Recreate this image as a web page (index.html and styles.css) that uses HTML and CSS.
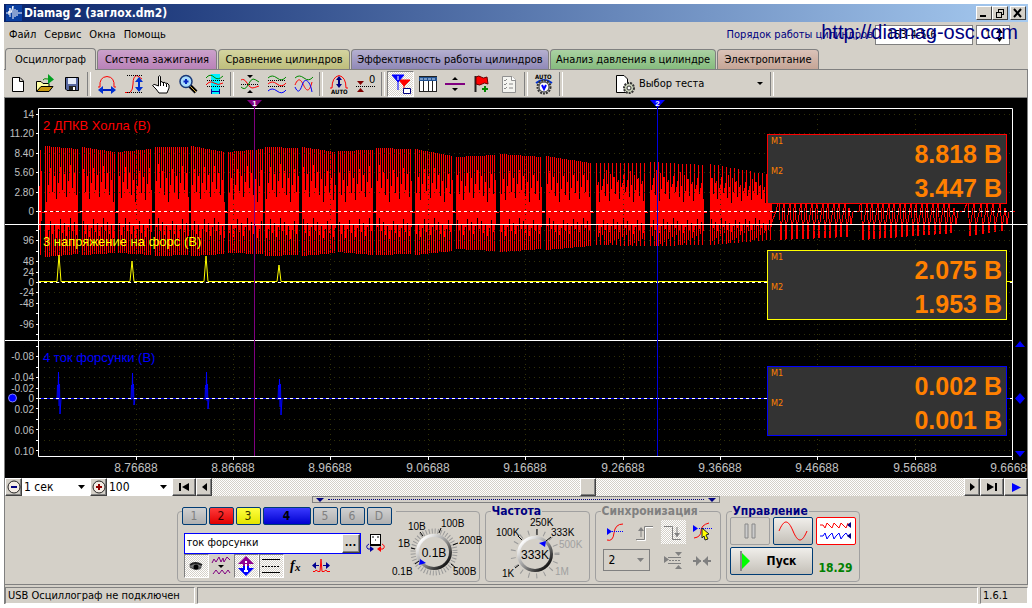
FILE: index.html
```html
<!DOCTYPE html>
<html lang="ru">
<head>
<meta charset="utf-8">
<title>Diamag 2 (заглох.dm2)</title>
<link rel="stylesheet" href="styles.css">
</head>
<body>
<div class="window">
  <header class="titlebar">
    <svg class="app-icon" width="16" height="16" viewBox="0 0 16 16"><rect width="16" height="16" fill="#0a3fa0"/><path d="M0 8H3V6V10M4 8V3V12M5 8L7 1V14M9 4V12M11 5V11M12 8H16" stroke="#fff" fill="none"/></svg>
    <h1 class="title">Diamag 2 (заглох.dm2)</h1>
    <div class="winbtns">
      <button class="winbtn" aria-label="Свернуть"><svg width="12" height="10"><path d="M2 8H8" stroke="#000" stroke-width="2"/></svg></button>
      <button class="winbtn" aria-label="Восстановить"><svg width="12" height="10" shape-rendering="crispEdges"><path d="M4 1.5H10M4.500 1V4M9.500 1V6H7M2 4.500H7M2.500 4V9.500H7.500V4" stroke="#000" fill="none"/></svg></button>
      <button class="winbtn close" aria-label="Закрыть"><svg width="12" height="10"><path d="M2 1L9 9M9 1L2 9" stroke="#000" stroke-width="2"/></svg></button>
    </div>
  </header>
  <div class="menurow">
    <nav class="menu"><button>Файл</button><button>Сервис</button><button>Окна</button><button>Помощь</button></nav>
    <label class="order-label" for="order">Порядок работы цилиндров</label>
    <select id="order" class="order"><option>153-4-5-6</option></select>
    <input class="order-num" aria-label="Номер цилиндра" value="1">
    <svg class="spin" width="7" height="14"><path d="M0 5L3.500 0L7 5ZM0 9L3.500 14L7 9ZM3 4h1v6h-1z"/></svg>
    <a class="sitelink" href="#">http://diamag-osc.com</a>
  </div>
  <div class="tabs" role="tablist">
    <button class="tab active" role="tab">Осциллограф</button>
    <button class="tab t-pink" role="tab">Система зажигания</button>
    <button class="tab t-olive" role="tab">Сравнение цилиндров</button>
    <button class="tab t-violet" role="tab">Эффективность работы цилиндров</button>
    <button class="tab t-green" role="tab">Анализ давления в цилиндре</button>
    <button class="tab t-rose" role="tab">Электропитание</button>
  </div>
  <div class="toolbar">
    <button class="tool" aria-label="Новый"><svg viewBox="0 0 20 20"><path d="M4.500 3.500H12L15.500 7V17.500H4.500ZM11.500 3.500V7.500H15.500" fill="#fff" stroke="#000"/></svg></button>
    <button class="tool" aria-label="Открыть"><svg viewBox="0 0 20 20"><path d="M1.500 17V7.500H6L8 9.500H14V12" fill="#ffffa8" stroke="#000"/><path d="M1.500 17.500L6 12.500H18L14 17.500Z" fill="#c89810" stroke="#000"/><path d="M8 6Q9 4 13 5" fill="none" stroke="#080"/><path d="M13 0L19 5.500L13 10Z" fill="#00a020"/></svg></button>
    <button class="tool" aria-label="Сохранить"><svg viewBox="0 0 20 20"><path d="M3.500 3.500H16.500V16.500H5L3.500 15Z" fill="#5868a0" stroke="#000"/><path d="M6 4H14V10H6Z" fill="#e4eaf8"/><path d="M7 12H14V16H7Z" fill="#222"/><path d="M11 13h2v3h-2z" fill="#fff"/></svg></button>
    <span class="sep"></span>
    <button class="tool" aria-label="Развертка"><svg viewBox="0 0 20 20"><path d="M1 13H3Q2 3 10 2.500Q18 3 17 13H19" fill="none" stroke="#f00"/><path d="M5 16H15" stroke="#0020c0" stroke-width="2"/><path d="M1 16L6 12V20ZM19 16L14 12V20Z" fill="#0030d0"/></svg></button>
    <button class="tool" aria-label="Амплитуда"><svg viewBox="0 0 20 20"><path d="M1 18.500H6Q9 16 9 10Q9 2 13 1.500L18 5" fill="none" stroke="#f00"/><path d="M3 1.500H18M3 18.500H18" stroke="#000" stroke-dasharray="1 1"/><path d="M15 5V16" stroke="#0030d0" stroke-width="2"/><path d="M15 3L19 8H11ZM15 18L19 13H11Z" fill="#0030d0"/></svg></button>
    <button class="tool" aria-label="Рука"><svg viewBox="0 0 20 20"><path d="M7.500 12V2.500Q8.500 1 9.500 2.500V8L11 7.500L12 9L13 8L15 9.500L16 9L18 11V14L16 19H8L5 15L1.500 11.500Q3 9.500 5 11Z" fill="#fff" stroke="#000"/><path d="M9.500 8V12M12.500 9V12M15.500 10V13" stroke="#000"/></svg></button>
    <button class="tool" aria-label="Лупа"><svg viewBox="0 0 20 20"><path d="M12 12L18 18" stroke="#000" stroke-width="4"/><path d="M12 12L18 18" stroke="#d8b040" stroke-width="1"/><circle cx="8" cy="7.500" r="6" fill="#a8dcfc" stroke="#183878" stroke-width="1.500"/><path d="M8 5V10M5.500 7.500H10.500" stroke="#0828c0" stroke-width="2"/></svg></button>
    <button class="tool" aria-label="Выделение"><svg viewBox="0 0 20 20"><rect x="6" width="9" height="20" fill="#00f0ff"/><path d="M1 4Q5 -1 9 3T18 2" fill="none" stroke="#080"/><path d="M1 11Q5 6 9 9T18 9" fill="none" stroke="#f00"/><path d="M2 6.500H19M2 12.500H19" stroke="#000" stroke-dasharray="1 1"/><path d="M6 17.500H15M6.500 15V20M14.500 15V20" stroke="#0000a0"/></svg></button>
    <span class="sep"></span>
    <button class="tool" aria-label="Совместить"><svg viewBox="0 0 20 20"><path d="M1 6Q4 4 7 9T12 14T19 12" fill="none" stroke="#f00"/><path d="M1 13Q5 17 8 11T13 5T19 8" fill="none" stroke="#080"/><path d="M1 10.500H19" stroke="#000" stroke-dasharray="1 1"/><path d="M7 1H13L10 4ZM7 19H13L10 16Z" fill="#000"/></svg></button>
    <button class="tool" aria-label="Разнести"><svg viewBox="0 0 20 20"><path d="M1 4Q5 0 10 4T19 3" fill="none" stroke="#080"/><path d="M1 10Q5 6 10 10T19 9" fill="none" stroke="#f00"/><path d="M1 17Q5 13 10 17T19 16" fill="none" stroke="#00f"/><path d="M1 6.500H19M1 12.500H19" stroke="#000" stroke-dasharray="1 1"/></svg></button>
    <button class="tool" aria-label="Наложить"><svg viewBox="0 0 20 20"><path d="M1 4Q5 0 10 4T19 3" fill="none" stroke="#080"/><path d="M1 11C5 1 8 8 10 12S15 20 18 8" fill="none" stroke="#f00"/><path d="M1 13C5 22 7 14 9 9S16 6 18 18" fill="none" stroke="#00f"/></svg></button>
    <span class="sep"></span>
    <button class="tool" aria-label="Авто"><svg viewBox="0 0 20 20"><path d="M1 14H3Q3 3 10 1.500Q17 3 17 14H19" fill="none" stroke="#f00"/><path d="M10 5V12" stroke="#000080" stroke-width="2"/><path d="M10 2L13 6H7ZM10 14L13 10H7Z" fill="#000080"/><text x="2" y="20" class="ic-auto">AUTO</text></svg></button>
    <button class="tool" aria-label="Ноль"><svg viewBox="0 0 20 20"><path d="M0 12.500H19" stroke="#000" stroke-dasharray="1 1"/><path d="M1 7H8L4.500 11ZM1 18H8L4.500 14Z" fill="#800000"/><text x="13" y="9" class="ic-zero">0</text></svg></button>
    <span class="sep"></span>
    <button class="tool on" aria-label="Маркеры"><svg viewBox="0 0 20 20"><path d="M8 6H19L13 12ZM13 10V18" fill="#f00" stroke="#f00"/><path d="M1 1H13L7 8ZM7 7V16" fill="#00f" stroke="#00f"/><path d="M7 2v4" stroke="#fff"/><path d="M12.500 14.500H19.500V19.500H12.500Z" fill="#fff" stroke="#000080"/></svg></button>
    <button class="tool" aria-label="Таблица"><svg viewBox="0 0 20 20"><rect x="1.500" y="2.500" width="17" height="15" fill="#fff" stroke="#222"/><rect x="1" y="3" width="18" height="4" fill="#205090"/><path d="M2 5H18" stroke="#cfe4ff" stroke-dasharray="3 1"/><path d="M5.500 7V17M10.500 7V17M14.500 7V17" stroke="#222"/></svg></button>
    <button class="tool" aria-label="Разделитель"><svg viewBox="0 0 20 20"><path d="M0 10H20" stroke="#800080" stroke-width="2"/><path d="M7 6H13L10 3ZM7 14H13L10 17Z"/></svg></button>
    <button class="tool" aria-label="Флаг"><svg viewBox="0 0 20 20"><path d="M3.500 2V18" stroke="#222" stroke-width="2"/><path d="M4 3Q7 1 9 3T15 3L16 10Q12 8 10 10T4 10Z" fill="#f00" stroke="#600"/><path d="M13 12V18M10 15H16" stroke="#080" stroke-width="2"/></svg></button>
    <button class="tool" aria-label="Список" disabled><svg viewBox="0 0 20 20"><path d="M3.500 2.500H13L16.500 6V18.500H3.500Z" fill="#f4f4f0" stroke="#909090"/><path d="M12.500 2V6.500H17" fill="#fff" stroke="#909090"/><path d="M5 6L6 7L8 5M5 10L6 11L8 9M5 14L6 15L8 13M10 10H14M10 14H14" fill="none" stroke="#888"/></svg></button>
    <span class="sep"></span>
    <button class="tool" aria-label="Автовольтметр"><svg viewBox="0 0 20 24" class="tall"><text x="1" y="7" class="ic-auto">AUTO</text><path d="M2 11Q10 5 18 11" fill="none" stroke="#0030d0" stroke-width="2"/><circle cx="10" cy="15" r="6.500" fill="#ccc" stroke="#333" stroke-width="2" stroke-dasharray="2 1"/><circle cx="10" cy="15" r="5" fill="#fff" stroke="#333"/><path d="M8 13L10 17L12 13" fill="none" stroke="#00f" stroke-width="2"/></svg></button>
    <span class="sep"></span>
    <button class="testpick"><svg width="22" height="20" viewBox="0 0 22 20"><path d="M1.500 1.500H9L12.500 5V18.500H1.500Z" fill="#fff" stroke="#000"/><circle cx="14" cy="14" r="5" fill="#c8d0b8" stroke="#333" stroke-width="2" stroke-dasharray="2 1"/><circle cx="14" cy="14" r="2" fill="#fff" stroke="#333"/></svg><span>Выбор теста</span><i class="caret"></i></button>
    <span class="sep"></span>
  </div>

  <main class="scope" id="scope">
    <svg id="plot" class="plot" role="img" aria-label="Осциллограммы"></svg>
    <section class="readouts">
      <div class="readout r-red"><div class="marks"><span>M1</span><span>M2</span></div><div class="vals"><b>8.818 В</b><b>3.447 В</b></div></div>
      <div class="readout r-yellow"><div class="marks"><span>M1</span><span>M2</span></div><div class="vals"><b>2.075 В</b><b>1.953 В</b></div></div>
      <div class="readout r-blue"><div class="marks"><span>M1</span><span>M2</span></div><div class="vals"><b>0.002 В</b><b>0.001 В</b></div></div>
    </section>
  </main>

  <div class="scrollrow">
    <button class="raised sq" aria-label="Меньше"><svg width="14" height="14"><circle cx="7" cy="7" r="6" fill="#f4ece4" stroke="#222"/><path d="M4 7H10" stroke="#000080" stroke-width="2"/></svg></button>
    <select class="scale s1" aria-label="Развертка"><option>1 сек</option></select>
    <button class="raised sq" aria-label="Больше"><svg width="14" height="14"><circle cx="7" cy="7" r="6" fill="#f4ece4" stroke="#222"/><path d="M4 7H10M7 4V10" stroke="#900000" stroke-width="2"/></svg></button>
    <select class="scale s2" aria-label="Масштаб"><option>100</option></select>
    <button class="raised wide" aria-label="В начало"><svg width="12" height="8"><path d="M1 0H3V8H1ZM11 0V8L4 4Z"/></svg></button>
    <button class="raised thin" aria-label="Назад"><svg width="5" height="8"><path d="M5 0V8L0 4Z"/></svg></button>
    <div class="track"><span class="thumb raised"></span></div>
    <button class="raised thin" aria-label="Вперед"><svg width="5" height="8"><path d="M0 0V8L5 4Z"/></svg></button>
    <button class="raised wide" aria-label="В конец"><svg width="12" height="8"><path d="M9 0H11V8H9ZM1 0V8L8 4Z"/></svg></button>
    <button class="raised wide" aria-label="Воспроизвести"><svg width="9" height="9"><path d="M0 0V9L9 4.500Z" fill="#00f"/></svg></button>
  </div>

  <div class="bottom">
    <div class="splitter"><i class="caret navy"></i><span></span><i class="caret navy"></i></div>
    <div class="panels">
      <section class="group channels">
        <div class="chbtns">
          <button class="ch" disabled>1</button><button class="ch c2">2</button><button class="ch c3">3</button><button class="ch c4">4</button><button class="ch" disabled>5</button><button class="ch" disabled>6</button><button class="ch" disabled>D</button>
        </div>
        <div class="chbody">
          <div class="chleft">
            <div class="namerow">
              <div class="namebox"><input aria-label="Имя канала" value="ток форсунки"><button class="raised">...</button></div>
              <button class="flat" aria-label="Обмен"><svg viewBox="0 0 20 20"><rect x="5.500" y="1.500" width="10" height="11" fill="#fff" stroke="#000"/><path d="M5 11.500H16" stroke="#000"/><path d="M7 4h2M12 4h2M10 7h1" stroke="#000"/><path d="M4 11Q0 13 3 16H5" fill="none" stroke="#0000a0"/><path d="M5 13V19L9 16Z" fill="#0000a0"/><path d="M17 11Q21 13 18 16H16" fill="none" stroke="#f00"/><path d="M16 13V19L12 16Z" fill="#f00"/></svg></button>
            </div>
            <div class="chtools">
              <button class="flat on" aria-label="Видимость"><svg viewBox="0 0 20 20"><path d="M3 10Q10 4 16 9L15 13Q8 16 3 10Z" fill="#777"/><path d="M4 9Q9 5 16 9" fill="none" stroke="#222" stroke-width="2"/><path d="M4 11Q10 15 15 11" fill="none" stroke="#444"/><circle cx="10" cy="11" r="2.500"/></svg></button>
              <button class="flat" aria-label="Фильтр"><svg viewBox="0 0 20 20"><path d="M1 7L3 3L5 6L8 1L10 6L12 2L13 6L16 1L19 4" fill="none" stroke="#800080"/><path d="M7 9H13L10 12Z"/><path d="M2 18L5 14L8 18L11 14L14 18L17 14L19 17" fill="none" stroke="#800080"/></svg></button>
              <button class="flat on" aria-label="Инверсия"><svg viewBox="0 0 20 20"><path d="M10 0L18 8H13V10H7V8H2Z" fill="#900090"/><path d="M10 20L18 12H13V10H7V12H2Z" fill="#00f"/><path d="M10 5v2M10 8v7M8 15h4" stroke="#fff" stroke-width="2"/></svg></button>
              <button class="flat on" aria-label="Линии"><svg viewBox="0 0 20 20"><path d="M1 3.500H19M1 16.500H19" stroke="#000"/><path d="M1 10.500H19" stroke="#000" stroke-dasharray="2 1"/></svg></button>
              <button class="flat" aria-label="Функция"><svg viewBox="0 0 20 20"><text x="4" y="14" class="ic-f">f</text><text x="9" y="15" class="ic-x">x</text></svg></button>
              <button class="flat" aria-label="Сдвиг"><svg viewBox="0 0 20 20"><path d="M2 15.500H4L5 14L7 15.500H9L10 3L11 15.500H13L15 14L16 15.500H19" fill="none" stroke="#f00"/><path d="M1 9.500L5 6V9H8V10H5V13ZM19 9.500L15 6V9H12V10H15V13Z" fill="#000090"/></svg></button>
            </div>
          </div>
          <svg class="knob k1" width="94" height="66" viewBox="384 516 94 66">
            <circle cx="430" cy="556" r="21" class="tickring"/>
            <g class="knobface"><circle cx="430" cy="556" r="18" fill="url(#rim)"/><circle cx="430" cy="556" r="15"/></g>
            <path d="M411 568L415 565M407 552L411 553M416 536L419 540M437 532L435 537M454 547L449 549M452 572L447 568" stroke="#000"/>
            <path d="M416 563L422 567L415 569Z" fill="#00f"/>
            <g class="ktext"><text x="388" y="579">0.1В</text><text x="394" y="551">1В</text><text x="404" y="534">10В</text><text x="437" y="531">100В</text><text x="455" y="548">200В</text><text x="449" y="579">500В</text></g>
            <text x="430" y="561" class="kval">0.1В</text>
          </svg>
        </div>
      </section>
      <fieldset class="group freq"><legend>Частота</legend>
        <svg class="knob k2" width="100" height="66" viewBox="486 516 100 66">
          <defs><linearGradient id="rim" x1="0" y1="0" x2="1" y2="1"><stop offset="0.150" stop-color="#fff"/><stop offset="0.550" stop-color="#888"/><stop offset="0.850" stop-color="#111"/></linearGradient></defs>
          <circle cx="534" cy="556" r="22" class="tickring sparse"/>
          <g class="knobface"><circle cx="534" cy="556" r="18" fill="url(#rim)"/><circle cx="534" cy="556" r="15"/></g>
          <path d="M514 570L518 567M517 538L521 542M536 531V537M550 539L545 543" stroke="#000"/>
          <path d="M538 545L545 543L544 549Z" fill="#00f"/>
          <g class="ktext"><text x="501" y="579">1K</text><text x="495" y="538">100K</text><text x="529" y="528">250K</text><text x="550" y="538">333K</text><text x="558" y="550" class="dim">500K</text><text x="554" y="577" class="dim">1M</text></g>
          <text x="534" y="561" class="kval">333K</text>
        </svg>
      </fieldset>
      <fieldset class="group sync" ><legend>Синхронизация</legend>
        <div class="syncgrid">
          <button class="flat" aria-label="Уровень"><svg viewBox="0 0 20 20"><path d="M2 18Q8 20 9 11T18 2" fill="none" stroke="#f00"/><path d="M7 9.500H19" stroke="#00f" stroke-dasharray="1 1"/><path d="M2 6V13L7 9.500Z" fill="#00f"/></svg></button>
          <button class="flat" aria-label="Фронт"><svg viewBox="0 0 20 20"><path d="M2 17.500H10.500V4.500H19" fill="none" stroke="#808080"/><path d="M3 18.500H11.500V5.500H19" fill="none" stroke="#fff"/><path d="M7 15V7" stroke="#808080"/><path d="M4 9L7 5L10 9Z" fill="#808080"/></svg></button>
          <button class="flat on plain" aria-label="Спад"><svg viewBox="0 0 20 20"><path d="M1 4.500H9.500V17.500H18" fill="none" stroke="#808080"/><path d="M14 5V15" stroke="#808080"/><path d="M11 11L14 15L17 11Z" fill="#808080"/></svg></button>
          <button class="flat" aria-label="Захват"><svg viewBox="0 0 20 20"><path d="M2 16Q9 15 9 9T17 1" fill="none" stroke="#f00"/><path d="M7 6.500H20" stroke="#00f" stroke-dasharray="1 1"/><path d="M1 3V10L6 6.500Z" fill="#00f"/><path d="M10 6L17 12L14 13L16 17L13 18L12 14L10 16Z" fill="#ff0" stroke="#222"/></svg></button>
          <select class="syncsel" aria-label="Канал"><option>2</option></select>
          <button class="flat g3" aria-label="Гистерезис"><svg viewBox="0 0 20 20"><path d="M1 5V12L6 8.500ZM12 1H19L15.500 5ZM12 18H19L15.500 14Z" fill="#808080"/><path d="M5 6.500H18M5 12.500H18" stroke="#808080"/><path d="M6 9.500H18" stroke="#808080" stroke-dasharray="2 1"/></svg></button>
          <button class="flat" aria-label="Центр"><svg viewBox="0 0 20 20"><path d="M1 10H9M11 10H19" stroke="#808080" stroke-width="2"/><path d="M4 5V15L9 10ZM16 5V15L11 10Z" fill="#808080"/></svg></button>
        </div>
      </fieldset>
      <fieldset class="group ctl"><legend>Управление</legend>
        <div class="ctlgrid">
          <button class="big off" aria-label="Пауза"><svg width="12" height="16"><path d="M1 1h3v14h-3zM8 1h3v14h-3z" fill="#ccc" stroke="#888"/></svg></button>
          <button class="big" aria-label="Синус"><svg width="32" height="22"><path d="M2 11C7 -1 11 -1 16 11S25 23 30 11" fill="none" stroke="#f00"/></svg></button>
          <button class="big rec" aria-label="Каналы"><svg width="34" height="22"><path d="M1 5H4L6 8L8 3L10 5L13 8L15 3L17 5L20 8L22 3L24 5L27 8L29 3" fill="none" stroke="#f00"/><path d="M1 16H4L6 13L8 19L10 16L13 13L15 19L17 16L20 13L22 19L24 16L27 13L29 16" fill="none" stroke="#00f"/><path d="M28 5L32 2V8ZM28 16L32 13V19Z" fill="#000080"/></svg></button>
          <button class="big start"><svg width="12" height="20"><path d="M1 1V19L10 10Z" fill="#0f0"/><path d="M1 0V20" stroke="#888" stroke-width="2"/></svg><span>Пуск</span></button>
          <output class="volt">18.29</output>
        </div>
      </fieldset>
    </div>
  </div>
  <footer class="status"><span class="st main">USB Осциллограф не подключен</span><span class="st mid"></span><span class="st ver">1.6.1</span></footer>
</div>
<script src="plot.js"></script>
</body>
</html>
```
FILE: styles.css
```css
* { box-sizing: border-box; }
body { margin: 0; background: #fff; font: 11px/14px "DejaVu Sans Condensed", "DejaVu Sans", sans-serif; color: #000; }
button, input, select { font: inherit; color: inherit; margin: 0; padding: 0; border: 0; border-radius: 0; background: none; appearance: none; }
svg { display: block; flex: none; }
.window { margin: 4px; background: #d4d0c8; }
.titlebar { display: flex; align-items: center; height: 18px; padding: 0 2px; background: linear-gradient(90deg, #0a246a, #a6caf0); }
.title { margin: 0 0 0 2px; flex: 1; color: #fff; font-size: 12px; line-height: 18px; font-weight: bold; }
.winbtns { display: flex; }
.winbtn { width: 16px; height: 14px; background: #d4d0c8; border: 1px solid; border-color: #fff #404040 #404040 #fff; display: grid; place-items: center; }
.winbtn.close { margin-left: 2px; }
.menurow { position: relative; display: flex; align-items: center; height: 25px; padding: 0 18px 0 5px; }
.menu { display: flex; gap: 8px; flex: 1; }
.order-label { color: navy; margin-right: 2px; }
.order { width: 98px; height: 20px; background: #fff; border: 1px solid #808080; padding-left: 12px; }
.order-num { width: 34px; height: 20px; margin-left: 3px; background: #fff; border: 1px solid #808080; padding-left: 8px; }
.spin { position: absolute; right: 25px; top: 6px; }
.sitelink { position: absolute; right: 10px; top: -2px; font: 20px/24px "Liberation Sans", Arial, sans-serif; color: navy; text-decoration: none; }
.tabs { display: flex; align-items: flex-end; gap: 1px; height: 23px; padding-left: 1px; border-bottom: 1px solid #808080; }
.tab { height: 20px; width: 120px; border: 1px solid #808080; border-bottom: 0; border-radius: 4px 4px 0 0; white-space: nowrap; }
.tab.active { width: 91px; height: 22px; margin-bottom: -1px; background: #d4d0c8; }
.t-pink { background: linear-gradient(#cba1cb, #b982b8); }
.t-olive { width: 132px; background: linear-gradient(#d4d4a0, #bebe7c); }
.t-violet { width: 198px; background: linear-gradient(#b5b0d0, #9089b8); }
.t-green { width: 166px; background: linear-gradient(#aad2a2, #86bb7e); }
.t-rose { width: 102px; background: linear-gradient(#dbc2b8, #c5a596); }
.toolbar { display: flex; align-items: center; height: 28px; border-bottom: 1px solid #808080; border-right: 1px solid #808080; }
.tool { width: 27px; height: 26px; display: grid; place-items: center; }
.tool svg { width: 20px; height: 20px; }
.tool svg.tall { height: 24px; }
.tool.on, .flat.on { background: repeating-conic-gradient(#fff 0 25%, #d4d0c8 0 50%) 0 0 / 2px 2px; border: 1px solid; border-color: #808080 #fff #fff #808080; }
.sep { width: 8px; height: 24px; display: flex; justify-content: center; }
.sep::before { content: ""; width: 2px; height: 24px; border-left: 1px solid #808080; border-right: 1px solid #fff; }
.ic-auto { font: bold 6px/6px "DejaVu Sans Condensed", sans-serif; }
.ic-zero { font: 11px/11px "DejaVu Sans Condensed", sans-serif; }
.testpick { display: flex; align-items: center; gap: 2px; width: 153px; margin-left: 50px; }
.testpick span { flex: 1; text-align: left; }
.caret { width: 0; height: 0; border: 3px solid transparent; border-top: 3px solid #000; border-bottom: 0; }
.testpick .caret { margin-right: 5px; }
.caret.navy { border-width: 4px 4px 0; border-top-color: navy; }
.scope { position: relative; height: 380px; background: #000; border-left: 1px solid #808080; border-right: 1px solid #808080; overflow: hidden; }
.plot { width: 100%; height: 380px; }
.plot text { font-family: "Liberation Sans", Arial, sans-serif; }
.axis { font-size: 10px; fill: #c0c0c0; text-anchor: end; }
.time { font-size: 12px; fill: #c0c0c0; text-anchor: middle; }
.name { font-size: 13px; }
.flagtext { font-size: 8px; font-weight: bold; fill: #fff; text-anchor: middle; }
.readouts { position: absolute; top: 36px; right: 20px; display: grid; gap: 46px; }
.readout { width: 240px; height: 70px; display: flex; justify-content: space-between; background: #333; border: 1px solid; padding: 0 4px 0 3px; color: #ff8000; }
.marks { display: flex; flex-direction: column; gap: 18px; font: 9px/12px "DejaVu Sans Condensed", sans-serif; }
.vals { display: flex; flex-direction: column; font: bold 25px/34px "Liberation Sans", Arial, sans-serif; padding-top: 2px; text-align: right; }
.r-red { border-color: #f00; }
.r-yellow { border-color: #ff0; }
.r-blue { border-color: #00f; }
.scrollrow { display: flex; height: 18px; border-left: 1px solid #808080; }
.raised { background: #d4d0c8; border: 1px solid; border-color: #fff #404040 #404040 #fff; box-shadow: inset -1px -1px #808080; display: grid; place-items: center; }
.sq { width: 17px; }
.scale { background: #fff url("data:image/svg+xml,%3Csvg xmlns='http://www.w3.org/2000/svg' width='7' height='4'%3E%3Cpath d='M0 0H7L3.500 4Z'/%3E%3C/svg%3E") no-repeat right 5px center; padding: 0 2px; font-size: 12px; }
.s1 { width: 68px; }
.s2 { width: 65px; }
.wide { width: 24px; }
.thin { width: 16px; }
.track { flex: 1; display: flex; background: repeating-conic-gradient(#fff 0 25%, #d4d0c8 0 50%) 0 0 / 2px 2px; }
.thumb { width: 16px; margin-left: 49%; }
.bottom { border: 1px solid #808080; border-top: 0; padding-bottom: 2px; }
.splitter { display: flex; align-items: center; gap: 4px; width: 408px; height: 7px; margin: 0 auto; border: 1px solid #808080; padding: 0 3px; }
.splitter span { flex: 1; border-top: 1px dotted navy; }
.panels { display: flex; justify-content: center; gap: 5px; margin-top: 8px; padding-left: 4px; }
.group { position: relative; height: 71px; margin: 0; padding: 0; border: 1px solid #a0a0a0; border-radius: 4px; min-width: 0; }
.group legend { margin-left: 5px; padding: 0 1px; font: bold 12px/12px "DejaVu Sans Condensed", sans-serif; color: navy; }
.channels { width: 303px; }
fieldset.group { height: 77px; margin-top: -6px; }
.chbtns { display: flex; gap: 2px; margin: -5px 0 0 4px; width: max-content; padding-right: 4px; background: #d4d0c8; position: relative; }
.ch { width: 25px; height: 18px; border: 1px solid #003c74; border-radius: 2px; background: linear-gradient(#d0d0d0, #b0b0b0); color: #808080; font-size: 12px; }
.c2 { background: linear-gradient(#ff3a3a, #e00000); color: #300; }
.c3 { background: linear-gradient(#ffff40, #e4e400); color: #330; }
.c4 { width: 48px; background: linear-gradient(#3a3aff, #0000d0); color: #000; font-weight: bold; }
.chbody { display: flex; justify-content: space-between; }
.chleft { padding: 7px 0 0 6px; }
.namerow { display: flex; align-items: center; gap: 2px; height: 22px; }
.namebox { display: flex; width: 177px; height: 21px; background: #fff; border: 1px solid #00f; }
.namebox input { flex: 1; min-width: 0; padding-left: 2px; }
.namebox .raised { width: 18px; font-weight: bold; line-height: 8px; }
.flat { width: 25px; height: 24px; display: grid; place-items: center; }
.flat svg { width: 20px; height: 20px; }
.flat.plain { border: 0; }
.chtools { display: flex; }
.ic-f { font: italic bold 14px/14px "Liberation Serif", serif; }
.ic-x { font: italic bold 11px/11px "Liberation Serif", serif; }
.knob { margin-top: -13px; }
.k2 { margin: -3px 0 0 1px; }
.knobface circle:last-child { fill: #d4d0c8; }
.tickring { fill: none; stroke: #999; stroke-width: 5; stroke-dasharray: 1 2; }
.tickring.sparse { stroke-dasharray: 1 7; }
.ktext { font: 10px/10px "Liberation Sans", Arial, sans-serif; }
.ktext .dim { fill: #a0a0a0; }
.kval { font: 12px/12px "Liberation Sans", Arial, sans-serif; text-anchor: middle; }
.freq { width: 105px; }
.sync { width: 126px; }
fieldset.sync legend { color: #808080; }
.syncgrid { display: grid; grid-template-columns: repeat(4, 25px); column-gap: 4px; row-gap: 5px; padding: 3px 0 0 7px; }
.syncsel { grid-column: span 2; width: 47px; height: 22px; border: 1px solid #808080; padding-left: 5px; font-size: 12px; background: url("data:image/svg+xml,%3Csvg xmlns='http://www.w3.org/2000/svg' width='7' height='4'%3E%3Cpath d='M0 0H7L3.500 4Z' fill='%23808080'/%3E%3C/svg%3E") no-repeat right 5px center; }
.ctl { width: 134px; }
.ctlgrid { display: grid; grid-template-columns: repeat(3, 40px); gap: 2px 3px; padding: 0 0 0 3px; }
.big { height: 28px; border: 1px solid #003c74; border-radius: 2px; background: linear-gradient(#f0eeea, #c4c0b8); display: grid; place-items: center; }
.big.off { border-color: #a0a0a0; background: #d4d0c8; }
.big.rec { border-color: #f00; background: #fff; }
.big.start { grid-column: span 2; display: flex; align-items: center; padding-left: 9px; font-size: 12px; font-weight: bold; }
.start span { flex: 1; }
.volt { align-self: end; font: bold 12px/14px "DejaVu Sans Condensed", sans-serif; color: green; text-align: center; }
.status { display: flex; gap: 2px; height: 19px; padding-top: 2px; border-left: 1px solid #808080; }
.st { border: 1px solid; border-color: #808080 #fff #fff #808080; padding: 1px 2px; line-height: 14px; }
.st.main { width: 190px; white-space: nowrap; }
.st.mid { flex: 1; }
.st.ver { width: 48px; }
```
FILE: plot.js
```javascript
const NS = "http://www.w3.org/2000/svg";
const svg = document.getElementById("plot");
const ORIGIN_X = 5, ORIGIN_Y = 98, LEFT = 38, BASE = 974;

// Tooth bursts of the crankshaft sensor: x from, x to, top from/to, bottom from/to
const bursts = [
  [38, 41, 150, 150, 255, 255],
  [45, 77, 146, 149, 257, 254], [82, 114, 147, 152, 255, 253], [118, 151, 152, 149, 253, 255],
  [155, 188, 147, 147, 256, 255], [191, 224, 146, 152, 256, 254], [228, 262, 152, 149, 253, 254],
  [265, 298, 147, 148, 256, 255], [302, 335, 147, 152, 256, 253], [338, 372, 151, 150, 252, 255],
  [376, 411, 148, 149, 255, 254], [415, 452, 149, 156, 255, 251], [456, 495, 157, 155, 249, 251],
  [500, 541, 154, 157, 252, 249], [546, 590, 156, 163, 250, 246], [596, 644, 163, 163, 245, 246],
  [650, 703, 162, 165, 246, 245], [710, 771, 164, 175, 245, 240]
];
const late = [[779, 850, 13, 240, 237], [861, 955, 17, 240, 233], [968, 1006, 6, 236, 230]];

function draw() {
  const w = svg.clientWidth, h = svg.clientHeight;
  const right = ORIGIN_X + w - 15;
  const k = (right - LEFT) / BASE;
  const X = v => Math.round(LEFT + (v - LEFT) * k);
  svg.setAttribute("viewBox", `${ORIGIN_X} ${ORIGIN_Y} ${w} ${h}`);
  svg.replaceChildren();

  const add = (tag, attrs, text) => {
    const e = document.createElementNS(NS, tag);
    for (const a in attrs) e.setAttribute(a, attrs[a]);
    if (text !== undefined) e.textContent = text;
    svg.append(e);
  };
  const line = (x1, y1, x2, y2, stroke, dash) => {
    const a = { d: `M${x1} ${y1}L${x2} ${y2}`, stroke, "shape-rendering": "crispEdges" };
    if (dash) a["stroke-dasharray"] = dash;
    add("path", a);
  };
  const rows1 = [114, 133, 153, 172, 192, 211];
  const rows2 = [230, 240, 251, 261, 272, 282, 292, 303, 313, 324, 334];
  const rows3 = rows2.map(y => y + 116);
  const rows = [...rows1, ...rows2, ...rows3];
  const cols = [0, 1, 2, 3, 4, 5, 6, 7, 8].map(i => X(135.5 + 97.4 * i));
  const grid = () => {
    rows.forEach(y => line(LEFT + 6, y + .5, right, y + .5, "#303008", "1 4"));
    cols.forEach(x => line(x + .5, 114, x + .5, 456, "#303008", "1 4"));
  };

  let d = "";
  for (const [a, b, t0, t1, b0, b1] of bursts) {
    const x0 = X(a), x1 = X(b), sparse = a > 590;
    for (let x = x0; x <= x1; x++) {
      const i = x - x0, f = i / Math.max(1, x1 - x0);
      let top = t0 + (t1 - t0) * f, bot = b0 + (b1 - b0) * f;
      const m = (i * 5 + a) % 17 / 17;
      if (sparse ? i % 4 === 1 || i % 4 === 3 : i % 2 === 1) {
        top += (204 - top) * (0.3 + 0.7 * m);
        bot -= (bot - 218) * (1 - 0.6 * m);
      } else if (sparse && i % 4 === 2) {
        top += (200 - top) * (0.2 + 0.5 * m);
        bot -= 12 * m;
      }
      d += `M${x + .5} ${Math.round(top)}V${Math.round(bot)}`;
    }
    d += `M${x1 + 1} 212.5H${x1 + 4}`;
  }
  add("path", { d, stroke: "#f00", fill: "none", "shape-rendering": "crispEdges" });

  d = `M${X(772)} 222L${X(776)} 211`;
  for (const [a, b, n, b0, b1] of late) {
    const p = (b - a) / n;
    for (let i = 0; i < n; i++) {
      const x = a + i * p, y = b0 + (b1 - b0) * i / n;
      d += `L${X(x)} 200L${X(x + 2)} ${y}L${X(x + 3)} 222L${X(x + p - 1)} 208`;
    }
    d += `L${X(b + 1)} 224L${X(b + 3)} 212L${X(b + 9)} 211`;
  }
  add("path", { d, stroke: "#f00", fill: "none", "shape-rendering": "crispEdges" });
  grid();

  const base = 281.5;
  d = `M${LEFT} ${base}`;
  [[58.5, 255], [132, 261], [206, 256], [279, 265]].forEach(([x, y]) => {
    d += `H${X(x) - 2}L${X(x)} ${y}L${X(x) + 2} ${base}`;
  });
  add("path", { d: d + `H${right}`, stroke: "#ff0", fill: "none" });

  d = "";
  [[58, 372, 414], [132, 373, 405], [206, 372, 409], [279, 379, 415]].forEach(([x, a, b]) => {
    const c = X(x);
    d += `M${c} 398L${c + .5} ${a}L${c + 1} ${b - 8}M${c + 1.5} 384L${c + 2} ${b}L${c + 3} 399M${c - 1} 400L${c - .5} 385`;
  });
  add("path", { d, stroke: "#00f", fill: "none" });
  line(LEFT, 398.5, right, 398.5, "#00f");

  [211, 282, 398].forEach(y => line(LEFT, y + .5, right, y + .5, "#fff", "3 3"));
  line(ORIGIN_X, 224.5, ORIGIN_X + w, 224.5, "#fff");
  line(ORIGIN_X, 340.5, right, 340.5, "#fff");
  add("path", { d: `M${LEFT + .5} 108.5H${right + .5}V456.5H${LEFT + .5}Z`, stroke: "#fff", fill: "none" });
  rows.forEach(y => line(LEFT - 2, y + .5, LEFT, y + .5, "#fff"));
  cols.concat(right).forEach(x => line(x + .5, 457, x + .5, 460, "#fff"));

  const m1 = X(254), m2 = X(657);
  line(m1 + .5, 104, m1 + .5, 456, "#800080");
  line(m2 + .5, 104, m2 + .5, 456, "#0000e0");
  add("path", { d: `M${m1 - 7} 100H${m1 + 8}L${m1 + .5} 108Z`, fill: "#800080" });
  add("path", { d: `M${m2 - 7} 100H${m2 + 8}L${m2 + .5} 108Z`, fill: "#00f" });
  add("text", { x: m1 + .5, y: 106, class: "flagtext" }, "1");
  add("text", { x: m2 + .5, y: 106, class: "flagtext" }, "2");

  const labels = [["14", 114], ["11.20", 133], ["8.40", 153], ["5.60", 172], ["2.80", 192], ["0", 211],
    ["96", 240], ["48", 261], ["24", 272], ["0", 282], ["-24", 292], ["-48", 303], ["-96", 324],
    ["-0.08", 356], ["-0.04", 377], ["-0.02", 388], ["0", 398], ["0.02", 409], ["0.06", 430], ["0.10", 451]];
  labels.forEach(([t, y]) => add("text", { x: 34, y: y + 4, class: "axis" }, t));
  cols.concat(right).forEach((x, i) =>
    add("text", { x, y: 472, class: "time" }, ((876688 + 10000 * i) / 100000).toFixed(5)));

  add("text", { x: 43, y: 130, class: "name", fill: "#f00" }, "2 ДПКВ Холла (В)");
  add("text", { x: 43, y: 246, class: "name", fill: "#ff0" }, "3 напряжение на форс (В)");
  add("text", { x: 43, y: 362, class: "name", fill: "#00f" }, "4 ток форсунки (В)");

  add("circle", { cx: 12.5, cy: 398, r: 4, fill: "#00f", stroke: "#8080ff" });
  const e = right + 8;
  add("path", { d: `M${e} 341L${e + 5} 347H${e - 5}ZM${e} 393L${e + 5} 398.5L${e} 404L${e - 5} 398.5ZM${e - 5} 451H${e + 5}L${e} 457Z`, fill: "#00f" });
}
draw();
addEventListener("resize", draw);
```
